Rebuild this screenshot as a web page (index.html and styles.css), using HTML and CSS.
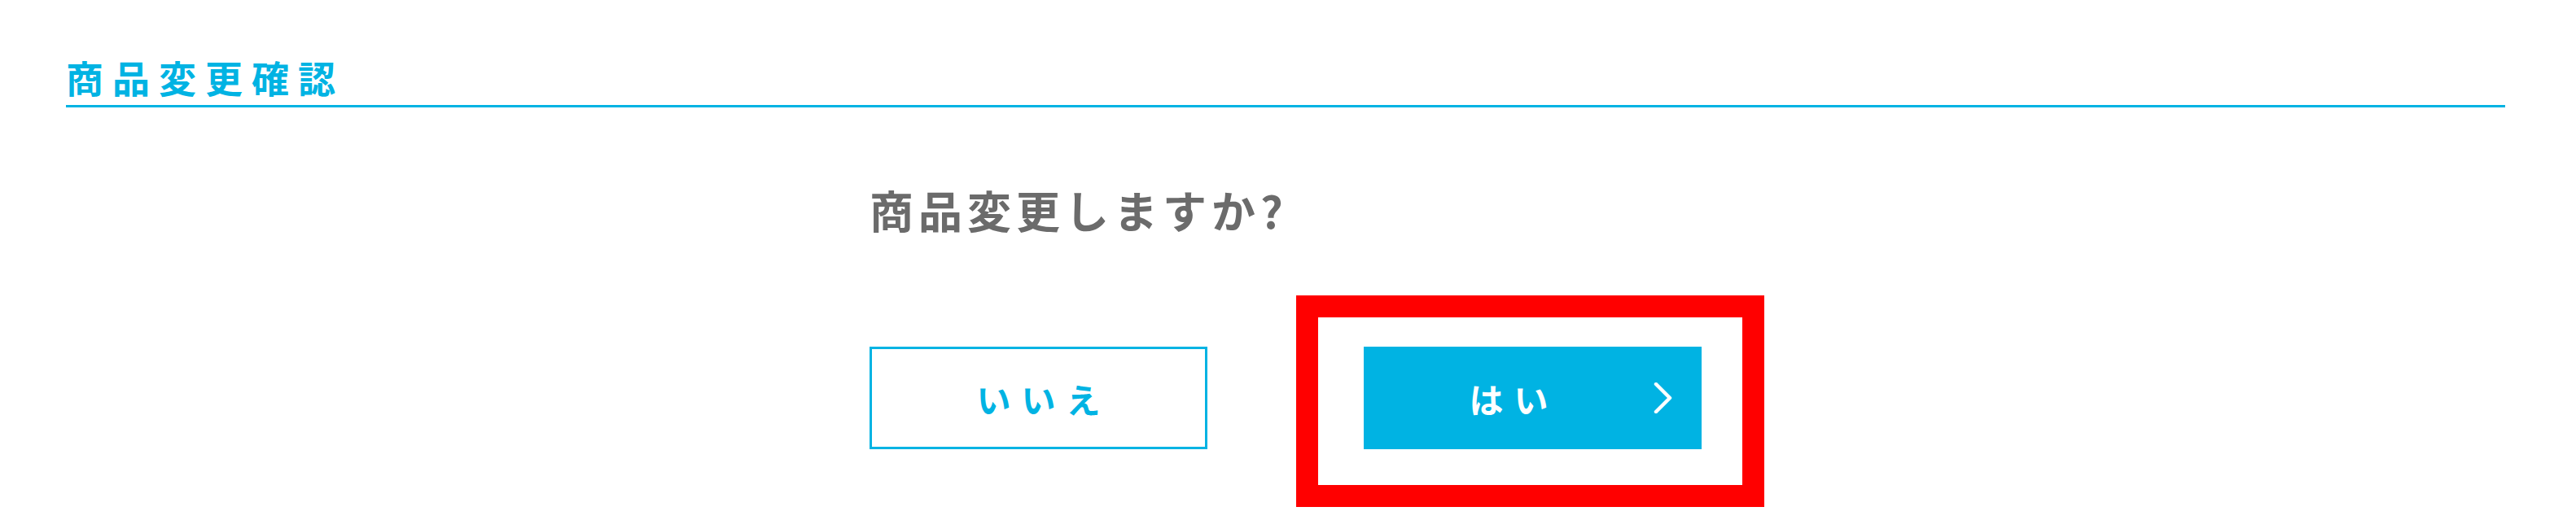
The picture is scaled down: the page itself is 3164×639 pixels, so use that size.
FILE: index.html
```html
<!DOCTYPE html>
<html lang="ja">
<head>
    <meta charset="UTF-8">
    <meta name="viewport" content="width=device-width, initial-scale=1.0">
    <title>商品変更確認</title>
    <link rel="stylesheet" href="styles.css">
</head>
<body>
    <div class="page">
        <h2 class="heading">商品変更確認</h2>

        <div class="confirm">
            <p class="confirm-text">商品変更しますか?</p>
            <div class="confirm-buttons">
                <button class="btn btn-no">いいえ</button>
                <div class="highlight">
                    <button class="btn btn-yes">
                        <span class="btn-label">はい</span>
                        <svg class="chevron" width="24" height="38" viewBox="0 0 24 38">
                            <polyline points="3,2 20,19 3,36" fill="none" stroke="#fff" stroke-width="4.5" stroke-linecap="round" stroke-linejoin="round"/>
                        </svg>
                    </button>
                </div>
            </div>
        </div>
    </div>
</body>
</html>
```

FILE: styles.css
```css
:root {
    --blue: #00b3e3;
    --gray: #6b6b6b;
    --mark: #ff0000;
}

html, body {
    height: 100%;
}

body {
    margin: 0;
    background: #fff;
    font-family: "Noto Sans CJK JP", "Noto Sans", sans-serif;
}

.page {
    margin: 0 87px 0 81px;
    padding-bottom: 100px;
}

.heading {
    margin: 0;
    padding-top: 71px;
    padding-bottom: 12px;
    font-size: 46px;
    line-height: 46px;
    font-weight: 700;
    letter-spacing: 11px;
    color: var(--blue);
    border-bottom: 3px solid var(--blue);
}

.confirm {
    width: 1022px;
    margin: 0 auto;
}

.confirm-text {
    margin: 99px 0 0;
    font-size: 54px;
    line-height: 54px;
    font-weight: 700;
    letter-spacing: 6px;
    color: var(--gray);
}

.confirm-buttons {
    display: flex;
    justify-content: space-between;
    margin-top: 141px;
}

.btn {
    width: 415px;
    height: 126px;
    border: none;
    font-family: inherit;
    font-size: 42px;
    font-weight: 700;
    letter-spacing: 13px;
    cursor: pointer;
}

.btn-no {
    background: #fff;
    color: var(--blue);
    border: 3px solid var(--blue);
    padding: 0 0 0 13px;
}

.highlight {
    position: relative;
}

.highlight::after {
    content: "";
    position: absolute;
    left: -83px;
    top: -63px;
    right: -77px;
    bottom: -71px;
    border: 27px solid var(--mark);
    pointer-events: none;
}

.btn-yes {
    display: grid;
    grid-template-columns: 1fr auto;
    align-items: center;
    padding: 0 35px 0 13px;
    background: var(--blue);
    color: #fff;
}

.btn-label {
    text-align: center;
}

.chevron {
    display: block;
}
```
